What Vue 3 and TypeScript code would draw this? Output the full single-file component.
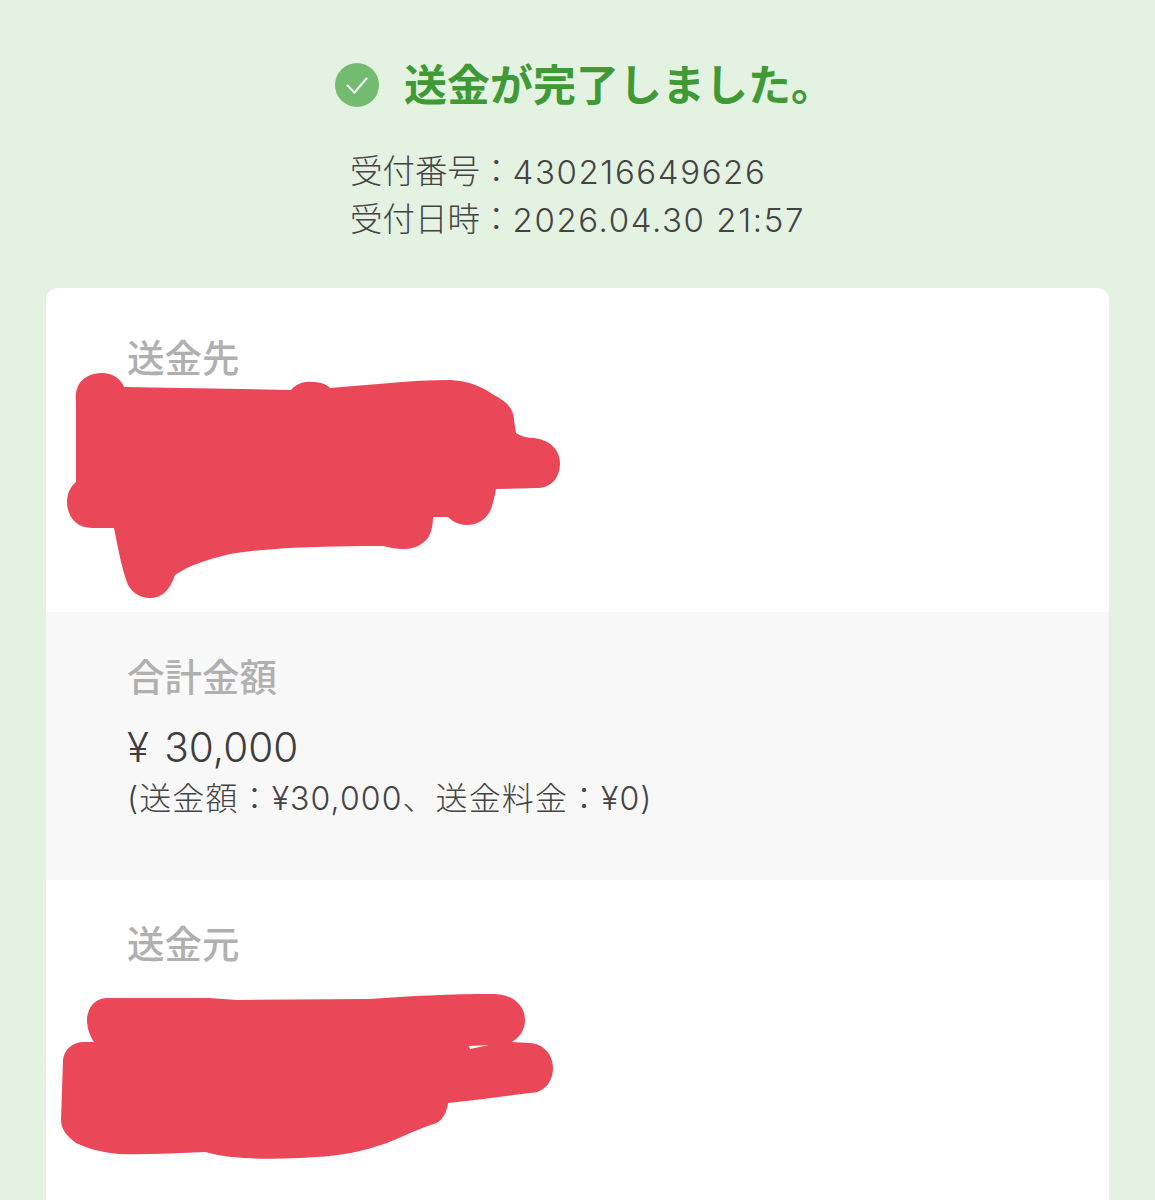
<script setup lang="ts">
const receipt = [
  { label: '受付番号', value: '430216649626' },
  { label: '受付日時', value: '2026.04.30 21:57' },
]
</script>

<template>
  <div class="page">
    <header class="result">
      <div class="title">
        <svg class="check" viewBox="0 0 44 44" width="44" height="44">
          <circle cx="22" cy="22" r="22" fill="#74bb72" />
          <path d="M12.5 22.5l7 7 12-14" fill="none" stroke="#f2f8f0" stroke-width="2.2" stroke-linecap="round" stroke-linejoin="round" />
        </svg>
        <h1>送金が完了しました。</h1>
      </div>
      <dl class="receipt">
        <div v-for="row in receipt" :key="row.label" class="receipt-row">
          <dt>{{ row.label }}：</dt>
          <dd>{{ row.value }}</dd>
        </div>
      </dl>
    </header>

    <main class="card">
      <section class="block to">
        <div class="label">送金先</div>
      </section>
      <section class="block total">
        <div class="label">合計金額</div>
        <div class="amount">¥ 30,000</div>
        <div class="breakdown">(送金額：¥30,000、送金料金：¥0)</div>
      </section>
      <section class="block from">
        <div class="label">送金元</div>
      </section>
    </main>

    <!-- hand drawn redaction over the names -->
    <svg class="scribble" viewBox="0 0 1155 1200" width="1155" height="1200">
      <path
        fill="#ea4858"
        d="M76 402C74 384 84 374 101 373C113 373 121 379 124 387L291 390C296 384 304 381 312 382C320 382 326 384 330 388C370 385 410 380 451 380C470 381 484 388 494 395C508 402 514 410 514 420L516 433C522 437 528 438 534 438C550 440 560 450 560 463C560 478 551 488 537 488L496 489C494 500 492 508 489 513C484 521 476 525 467 525C458 525 452 521 448 517L433 517C433 526 431 533 428 538C422 545 414 549 405 549C396 549 390 548 384 546C360 546 338 546 316 547C284 548 250 550 226 555C206 560 190 565 175 575C170 590 162 598 150 598C140 598 133 593 128 585C122 570 118 548 114 528L92 528C76 528 67 516 67 502C67 494 70 487 76 482Z"
      />
      <path
        fill="#ea4858"
        d="M87 1020C87 1008 95 998 107 998L209 998L237 1000L369 999C410 996 450 994 494 994C512 994 525 1005 525 1020C525 1030 520 1037 512 1042L530 1043C544 1044 553 1055 553 1068C553 1082 544 1093 530 1093C504 1096 476 1100 448 1103C447 1112 443 1119 437 1123C420 1128 404 1136 387 1143C364 1151 340 1156 316 1157C290 1159 266 1159 244 1158C228 1157 216 1155 205 1152C176 1153 146 1155 119 1154C100 1152 86 1148 76 1143C66 1136 61 1128 61 1120L63 1060C64 1050 72 1042 84 1042L94 1042C90 1036 87 1028 87 1020Z"
      />
      <path fill="#fff" d="M469 1046L489 1045L470 1049Z" />
    </svg>
  </div>
</template>

<style>
body {
  background: #e4f2e2;
}
</style>

<style scoped>
.page {
  position: relative;
  height: 1200px;
  overflow: hidden;
  box-sizing: border-box;
  padding: 0 46px;
  background: #e4f2e2;
  font-family: Inter, "Noto Sans CJK JP", sans-serif;
  color: #444;
}

.result {
  display: flex;
  flex-direction: column;
  align-items: center;
  padding-top: 63px;
  height: 288px;
  box-sizing: border-box;
}

.title {
  display: flex;
  align-items: center;
  gap: 24px;
  height: 44px;
  margin-left: 14px;
}

.check {
  flex: none;
}

h1 {
  margin: 0 0 0 1px;
  font-size: 43px;
  line-height: 44px;
  font-weight: 700;
  color: #3f9a35;
  white-space: nowrap;
}

.receipt {
  margin: 41px 0 0;
  font-size: 32.5px;
  line-height: 48px;
  font-weight: 300;
}

.receipt-row {
  display: flex;
}

dd {
  margin: 0;
  font-size: 33px;
  letter-spacing: 1.6px;
}

.card {
  border-radius: 12px 12px 0 0;
  background: #fff;
  overflow: hidden;
}

.block {
  box-sizing: border-box;
  padding: 0 81px;
}

.to {
  height: 324px;
  padding-top: 49px;
}

.total {
  height: 268px;
  padding-top: 44px;
  background: #f8f8f8;
}

.from {
  height: 320px;
  padding-top: 43px;
}

.label {
  font-size: 37.5px;
  line-height: 44px;
  font-weight: 500;
  color: #b0b0b0;
}

.amount {
  margin-top: 24px;
  font-size: 40.5px;
  line-height: 48px;
  font-weight: 300;
  word-spacing: 4px;
  color: #3d3d3d;
}

.breakdown {
  margin-top: 5px;
  font-size: 32px;
  line-height: 44px;
  font-weight: 300;
  letter-spacing: 1.1px;
  color: #444;
  white-space: nowrap;
}

.scribble {
  position: absolute;
  top: 0;
  left: 0;
  pointer-events: none;
}
</style>
